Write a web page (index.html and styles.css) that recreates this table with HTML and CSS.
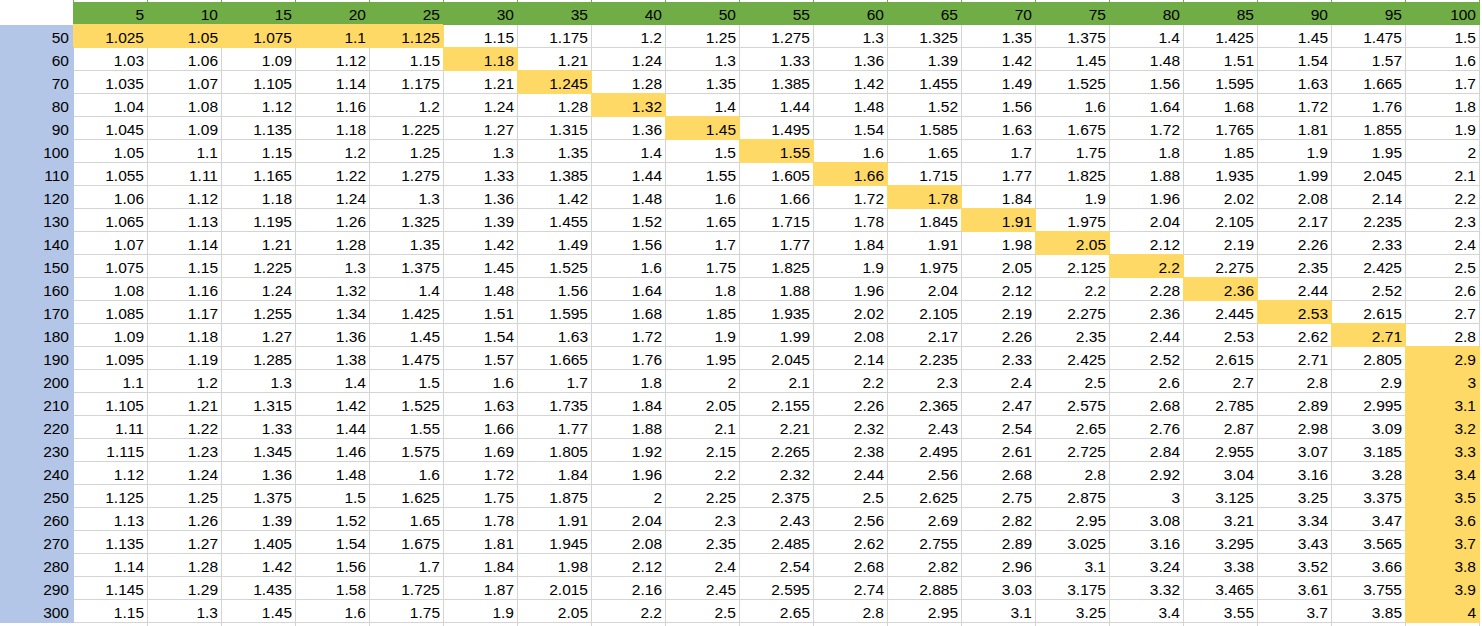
FILE: index.html
```html
<!DOCTYPE html>
<html lang="en">
<head>
<meta charset="utf-8">
<title>Sheet</title>
<link rel="stylesheet" href="styles.css">
</head>
<body>
<table class="sheet">
<colgroup><col class="c0"><col class="cd"><col class="cd"><col class="cd"><col class="cd"><col class="cd"><col class="cd"><col class="cd"><col class="cd"><col class="cd"><col class="cd"><col class="cd"><col class="cd"><col class="cd"><col class="cd"><col class="cd"><col class="cd"><col class="cd"><col class="cd"><col class="cd"></colgroup>
<tr class="hr"><th class="corner"></th><th>5</th><th>10</th><th>15</th><th>20</th><th>25</th><th>30</th><th>35</th><th>40</th><th>50</th><th>55</th><th>60</th><th>65</th><th>70</th><th>75</th><th>80</th><th>85</th><th>90</th><th>95</th><th>100</th></tr>
<tr><td class="rh">50</td><td class="h">1.025</td><td class="h">1.05</td><td class="h">1.075</td><td class="h">1.1</td><td class="h">1.125</td><td>1.15</td><td>1.175</td><td>1.2</td><td>1.25</td><td>1.275</td><td>1.3</td><td>1.325</td><td>1.35</td><td>1.375</td><td>1.4</td><td>1.425</td><td>1.45</td><td>1.475</td><td>1.5</td></tr>
<tr><td class="rh">60</td><td>1.03</td><td>1.06</td><td>1.09</td><td>1.12</td><td>1.15</td><td class="h">1.18</td><td>1.21</td><td>1.24</td><td>1.3</td><td>1.33</td><td>1.36</td><td>1.39</td><td>1.42</td><td>1.45</td><td>1.48</td><td>1.51</td><td>1.54</td><td>1.57</td><td>1.6</td></tr>
<tr><td class="rh">70</td><td>1.035</td><td>1.07</td><td>1.105</td><td>1.14</td><td>1.175</td><td>1.21</td><td class="h">1.245</td><td>1.28</td><td>1.35</td><td>1.385</td><td>1.42</td><td>1.455</td><td>1.49</td><td>1.525</td><td>1.56</td><td>1.595</td><td>1.63</td><td>1.665</td><td>1.7</td></tr>
<tr><td class="rh">80</td><td>1.04</td><td>1.08</td><td>1.12</td><td>1.16</td><td>1.2</td><td>1.24</td><td>1.28</td><td class="h">1.32</td><td>1.4</td><td>1.44</td><td>1.48</td><td>1.52</td><td>1.56</td><td>1.6</td><td>1.64</td><td>1.68</td><td>1.72</td><td>1.76</td><td>1.8</td></tr>
<tr><td class="rh">90</td><td>1.045</td><td>1.09</td><td>1.135</td><td>1.18</td><td>1.225</td><td>1.27</td><td>1.315</td><td>1.36</td><td class="h">1.45</td><td>1.495</td><td>1.54</td><td>1.585</td><td>1.63</td><td>1.675</td><td>1.72</td><td>1.765</td><td>1.81</td><td>1.855</td><td>1.9</td></tr>
<tr><td class="rh">100</td><td>1.05</td><td>1.1</td><td>1.15</td><td>1.2</td><td>1.25</td><td>1.3</td><td>1.35</td><td>1.4</td><td>1.5</td><td class="h">1.55</td><td>1.6</td><td>1.65</td><td>1.7</td><td>1.75</td><td>1.8</td><td>1.85</td><td>1.9</td><td>1.95</td><td>2</td></tr>
<tr><td class="rh">110</td><td>1.055</td><td>1.11</td><td>1.165</td><td>1.22</td><td>1.275</td><td>1.33</td><td>1.385</td><td>1.44</td><td>1.55</td><td>1.605</td><td class="h">1.66</td><td>1.715</td><td>1.77</td><td>1.825</td><td>1.88</td><td>1.935</td><td>1.99</td><td>2.045</td><td>2.1</td></tr>
<tr><td class="rh">120</td><td>1.06</td><td>1.12</td><td>1.18</td><td>1.24</td><td>1.3</td><td>1.36</td><td>1.42</td><td>1.48</td><td>1.6</td><td>1.66</td><td>1.72</td><td class="h">1.78</td><td>1.84</td><td>1.9</td><td>1.96</td><td>2.02</td><td>2.08</td><td>2.14</td><td>2.2</td></tr>
<tr><td class="rh">130</td><td>1.065</td><td>1.13</td><td>1.195</td><td>1.26</td><td>1.325</td><td>1.39</td><td>1.455</td><td>1.52</td><td>1.65</td><td>1.715</td><td>1.78</td><td>1.845</td><td class="h">1.91</td><td>1.975</td><td>2.04</td><td>2.105</td><td>2.17</td><td>2.235</td><td>2.3</td></tr>
<tr><td class="rh">140</td><td>1.07</td><td>1.14</td><td>1.21</td><td>1.28</td><td>1.35</td><td>1.42</td><td>1.49</td><td>1.56</td><td>1.7</td><td>1.77</td><td>1.84</td><td>1.91</td><td>1.98</td><td class="h">2.05</td><td>2.12</td><td>2.19</td><td>2.26</td><td>2.33</td><td>2.4</td></tr>
<tr><td class="rh">150</td><td>1.075</td><td>1.15</td><td>1.225</td><td>1.3</td><td>1.375</td><td>1.45</td><td>1.525</td><td>1.6</td><td>1.75</td><td>1.825</td><td>1.9</td><td>1.975</td><td>2.05</td><td>2.125</td><td class="h">2.2</td><td>2.275</td><td>2.35</td><td>2.425</td><td>2.5</td></tr>
<tr><td class="rh">160</td><td>1.08</td><td>1.16</td><td>1.24</td><td>1.32</td><td>1.4</td><td>1.48</td><td>1.56</td><td>1.64</td><td>1.8</td><td>1.88</td><td>1.96</td><td>2.04</td><td>2.12</td><td>2.2</td><td>2.28</td><td class="h">2.36</td><td>2.44</td><td>2.52</td><td>2.6</td></tr>
<tr><td class="rh">170</td><td>1.085</td><td>1.17</td><td>1.255</td><td>1.34</td><td>1.425</td><td>1.51</td><td>1.595</td><td>1.68</td><td>1.85</td><td>1.935</td><td>2.02</td><td>2.105</td><td>2.19</td><td>2.275</td><td>2.36</td><td>2.445</td><td class="h">2.53</td><td>2.615</td><td>2.7</td></tr>
<tr><td class="rh">180</td><td>1.09</td><td>1.18</td><td>1.27</td><td>1.36</td><td>1.45</td><td>1.54</td><td>1.63</td><td>1.72</td><td>1.9</td><td>1.99</td><td>2.08</td><td>2.17</td><td>2.26</td><td>2.35</td><td>2.44</td><td>2.53</td><td>2.62</td><td class="h">2.71</td><td>2.8</td></tr>
<tr><td class="rh">190</td><td>1.095</td><td>1.19</td><td>1.285</td><td>1.38</td><td>1.475</td><td>1.57</td><td>1.665</td><td>1.76</td><td>1.95</td><td>2.045</td><td>2.14</td><td>2.235</td><td>2.33</td><td>2.425</td><td>2.52</td><td>2.615</td><td>2.71</td><td>2.805</td><td class="h">2.9</td></tr>
<tr><td class="rh">200</td><td>1.1</td><td>1.2</td><td>1.3</td><td>1.4</td><td>1.5</td><td>1.6</td><td>1.7</td><td>1.8</td><td>2</td><td>2.1</td><td>2.2</td><td>2.3</td><td>2.4</td><td>2.5</td><td>2.6</td><td>2.7</td><td>2.8</td><td>2.9</td><td class="h">3</td></tr>
<tr><td class="rh">210</td><td>1.105</td><td>1.21</td><td>1.315</td><td>1.42</td><td>1.525</td><td>1.63</td><td>1.735</td><td>1.84</td><td>2.05</td><td>2.155</td><td>2.26</td><td>2.365</td><td>2.47</td><td>2.575</td><td>2.68</td><td>2.785</td><td>2.89</td><td>2.995</td><td class="h">3.1</td></tr>
<tr><td class="rh">220</td><td>1.11</td><td>1.22</td><td>1.33</td><td>1.44</td><td>1.55</td><td>1.66</td><td>1.77</td><td>1.88</td><td>2.1</td><td>2.21</td><td>2.32</td><td>2.43</td><td>2.54</td><td>2.65</td><td>2.76</td><td>2.87</td><td>2.98</td><td>3.09</td><td class="h">3.2</td></tr>
<tr><td class="rh">230</td><td>1.115</td><td>1.23</td><td>1.345</td><td>1.46</td><td>1.575</td><td>1.69</td><td>1.805</td><td>1.92</td><td>2.15</td><td>2.265</td><td>2.38</td><td>2.495</td><td>2.61</td><td>2.725</td><td>2.84</td><td>2.955</td><td>3.07</td><td>3.185</td><td class="h">3.3</td></tr>
<tr><td class="rh">240</td><td>1.12</td><td>1.24</td><td>1.36</td><td>1.48</td><td>1.6</td><td>1.72</td><td>1.84</td><td>1.96</td><td>2.2</td><td>2.32</td><td>2.44</td><td>2.56</td><td>2.68</td><td>2.8</td><td>2.92</td><td>3.04</td><td>3.16</td><td>3.28</td><td class="h">3.4</td></tr>
<tr><td class="rh">250</td><td>1.125</td><td>1.25</td><td>1.375</td><td>1.5</td><td>1.625</td><td>1.75</td><td>1.875</td><td>2</td><td>2.25</td><td>2.375</td><td>2.5</td><td>2.625</td><td>2.75</td><td>2.875</td><td>3</td><td>3.125</td><td>3.25</td><td>3.375</td><td class="h">3.5</td></tr>
<tr><td class="rh">260</td><td>1.13</td><td>1.26</td><td>1.39</td><td>1.52</td><td>1.65</td><td>1.78</td><td>1.91</td><td>2.04</td><td>2.3</td><td>2.43</td><td>2.56</td><td>2.69</td><td>2.82</td><td>2.95</td><td>3.08</td><td>3.21</td><td>3.34</td><td>3.47</td><td class="h">3.6</td></tr>
<tr><td class="rh">270</td><td>1.135</td><td>1.27</td><td>1.405</td><td>1.54</td><td>1.675</td><td>1.81</td><td>1.945</td><td>2.08</td><td>2.35</td><td>2.485</td><td>2.62</td><td>2.755</td><td>2.89</td><td>3.025</td><td>3.16</td><td>3.295</td><td>3.43</td><td>3.565</td><td class="h">3.7</td></tr>
<tr><td class="rh">280</td><td>1.14</td><td>1.28</td><td>1.42</td><td>1.56</td><td>1.7</td><td>1.84</td><td>1.98</td><td>2.12</td><td>2.4</td><td>2.54</td><td>2.68</td><td>2.82</td><td>2.96</td><td>3.1</td><td>3.24</td><td>3.38</td><td>3.52</td><td>3.66</td><td class="h">3.8</td></tr>
<tr><td class="rh">290</td><td>1.145</td><td>1.29</td><td>1.435</td><td>1.58</td><td>1.725</td><td>1.87</td><td>2.015</td><td>2.16</td><td>2.45</td><td>2.595</td><td>2.74</td><td>2.885</td><td>3.03</td><td>3.175</td><td>3.32</td><td>3.465</td><td>3.61</td><td>3.755</td><td class="h">3.9</td></tr>
<tr><td class="rh">300</td><td>1.15</td><td>1.3</td><td>1.45</td><td>1.6</td><td>1.75</td><td>1.9</td><td>2.05</td><td>2.2</td><td>2.5</td><td>2.65</td><td>2.8</td><td>2.95</td><td>3.1</td><td>3.25</td><td>3.4</td><td>3.55</td><td>3.7</td><td>3.85</td><td class="h">4</td></tr>
<tr class="tail"><td class="blank"></td><td></td><td></td><td></td><td></td><td></td><td></td><td></td><td></td><td></td><td></td><td></td><td></td><td></td><td></td><td></td><td></td><td></td><td></td><td></td></tr>
</table>
</body>
</html>
```

FILE: styles.css
```css
html, body {
  margin: 0;
  padding: 0;
  background: #ffffff;
  overflow: hidden;
}

.sheet {
  border-collapse: separate;
  border-spacing: 0;
  table-layout: fixed;
  width: 1480px;
  font-family: "Liberation Sans", Arial, sans-serif;
  font-size: 15.5px;
  color: #000000;
}

.c0 { width: 74px; }
.cd { width: 74px; }

.sheet td,
.sheet th {
  box-sizing: border-box;
  height: 23px;
  padding: 3px 3px 0 0;
  line-height: 19px;
  vertical-align: top;
  text-align: right;
  font-weight: normal;
  white-space: nowrap;
  overflow: hidden;
  border-right: 1px solid #d4d4d4;
  border-bottom: 1px solid #d4d4d4;
}

.sheet .hr th {
  height: 25px;
  padding-top: 5px;
  background: linear-gradient(to bottom, #ffffff 0, #ffffff 2px, #70ad47 2px) border-box;
  box-shadow: -1px 0 0 #70ad47;
  border-right-color: #70ad47;
  border-bottom-color: #70ad47;
}

.sheet .hr th.corner {
  background: #ffffff;
  box-shadow: none;
  border-right-color: #ffffff;
  border-bottom-color: #ffffff;
}

.sheet td.rh {
  background: #b4c6e7;
  border-color: #b4c6e7;
  padding-right: 4px;
}

.sheet td.h {
  background: #ffd966;
  border-color: #ffd966;
  box-shadow: -1px -1px 0 #ffd966;
}

.sheet .tail td {
  height: 8px;
}

.sheet .tail td.blank {
  border-right-color: #ffffff;
}
```
